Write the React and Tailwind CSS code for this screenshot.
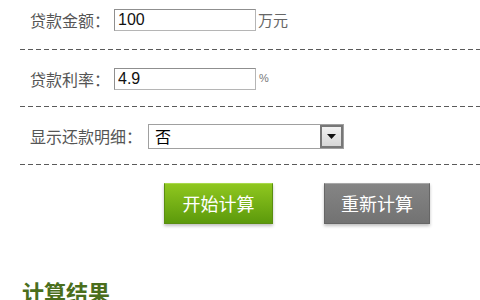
import React, { useState } from 'react';

const dash = 'h-px w-full bg-[repeating-linear-gradient(to_right,#5a5a5a_0_5px,transparent_5px_8px)]';

const LoanForm = () => {
  const [form, setForm] = useState({ amount: '100', rate: '4.9', detail: '否' });

  const handleChange = (e) => {
    setForm({ ...form, [e.target.name]: e.target.value });
  };

  return (
    <div className="w-[480px] h-[300px] overflow-hidden bg-white pl-[20px] font-['Liberation_Sans','Noto_Sans_CJK_SC',sans-serif]">
      <div className="pt-[9px] pb-[17px] pl-[10px] flex items-center">
        <span className="w-[84px] text-[16px] text-[#555] font-['Noto_Sans_CJK_SC',sans-serif] leading-none">贷款金额：</span>
        <input
          name="amount"
          value={form.amount}
          onChange={handleChange}
          className="w-[142px] h-[22px] border border-[#b5b5b5] border-t-[#8f8f8f] border-l-[#8f8f8f] px-[3px] text-[16px] text-[#111] outline-none"
        />
        <span className="ml-[2px] text-[15px] text-[#666] font-['Noto_Sans_CJK_SC',sans-serif]">万元</span>
      </div>
      <div className={dash}></div>

      <div className="pt-[18px] pb-[16px] pl-[10px] flex items-center">
        <span className="w-[84px] text-[16px] text-[#555] font-['Noto_Sans_CJK_SC',sans-serif] leading-none">贷款利率：</span>
        <input
          name="rate"
          value={form.rate}
          onChange={handleChange}
          className="w-[142px] h-[22px] border border-[#b5b5b5] border-t-[#8f8f8f] border-l-[#8f8f8f] px-[3px] text-[16px] text-[#111] outline-none"
        />
        <span className="ml-[3px] text-[11px] text-[#777]">%</span>
      </div>
      <div className={dash}></div>

      <div className="pt-[17px] pb-[15px] pl-[10px] flex items-center">
        <span className="w-[118px] text-[16px] text-[#555] font-['Noto_Sans_CJK_SC',sans-serif] leading-none">显示还款明细：</span>
        <div className="w-[196px] h-[25px] border border-[#a0a0a0] flex items-center">
          <span className="flex-1 pl-[6px] text-[16px] text-black font-['Noto_Sans_CJK_SC',sans-serif] leading-none">{form.detail}</span>
          <div className="w-[23px] h-[23px] border-2 border-[#777] bg-gradient-to-b from-[#f2f2f2] to-[#d6d6d6] flex items-center justify-center">
            <svg width="9" height="5" viewBox="0 0 9 5">
              <path d="M0 0h9L4.5 5z" fill="#111" />
            </svg>
          </div>
        </div>
      </div>
      <div className={dash}></div>

      <div className="pt-[18px] pl-[144px] flex items-start gap-[51px]">
        <button className="w-[109px] h-[41px] bg-gradient-to-b from-[#8fc71f] to-[#5c9a0b] border border-[#5a8e10] border-t-[#a9d94a] shadow-[0_2px_3px_rgba(0,0,0,0.25)] text-white text-[18px] font-['Noto_Sans_CJK_SC',sans-serif]">
          开始计算
        </button>
        <button className="w-[106px] h-[41px] bg-gradient-to-b from-[#858585] to-[#727272] border border-[#666] border-t-[#a8a8a8] shadow-[0_2px_3px_rgba(0,0,0,0.25)] text-white text-[18px] font-['Noto_Sans_CJK_SC',sans-serif]">
          重新计算
        </button>
      </div>

      <h2 className="mt-[56px] pl-[2px] text-[22px] font-bold text-[#4a6e1c] font-['Noto_Sans_CJK_SC',sans-serif] leading-none">计算结果</h2>
    </div>
  );
};

export default LoanForm;
